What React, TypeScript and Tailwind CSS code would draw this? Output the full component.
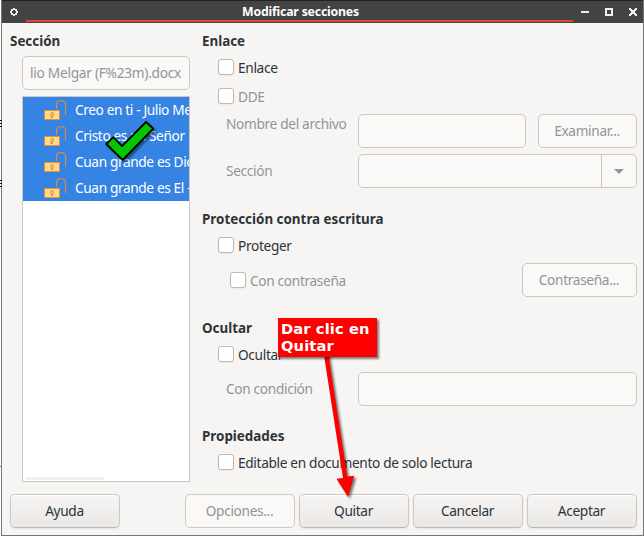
import React from "react";

const sections = [
  "Creo en ti - Julio Melgar (F#m)",
  "Cristo es mi Señor",
  "Cuan grande es Dios",
  "Cuan grande es El - Himno",
];

function Heading({ children }: { children: React.ReactNode }) {
  return (
    <h2 className="h-5 text-[13.4px] leading-5 font-bold tracking-normal whitespace-nowrap text-[#2e3436]">{children}</h2>
  );
}

function Check({ label, disabled = false }: { label: string; disabled?: boolean }) {
  return (
    <div className="flex h-4 items-center gap-1">
      <span className="h-4 w-4 shrink-0 rounded-[3px] border border-[#bfb8b1] bg-white shadow-[0_1px_1px_rgba(0,0,0,0.05)]" />
      <span className={`pt-0.5 whitespace-nowrap leading-4 ${disabled ? "text-[#929595]" : "text-[#2e3436]"}`}>{label}</span>
    </div>
  );
}

function Button({ label, disabled = false, width = "w-[110px]" }: { label: string; disabled?: boolean; width?: string }) {
  const look = disabled
    ? "border-[#cdc7c2] bg-[#faf9f8] text-[#929595]"
    : "border-[#cdc7c2] border-b-[#bfb8b1] bg-linear-to-b from-[#f6f5f4] to-[#e9e8e6] text-[#2e3436] shadow-[inset_0_1px_0_#fff,0_1px_2px_rgba(0,0,0,0.07)]";
  return (
    <button className={`flex h-[34px] shrink-0 items-center justify-center rounded-[5px] border pr-px ${width} ${look}`}>
      {label}
    </button>
  );
}

function Lock() {
  return (
    <svg className="h-[22px] w-6 shrink-0" viewBox="0 0 24 22" fill="none">
      <path d="M13.5 10V6Q13.5 1.5 18 1.5Q22.5 1.5 22.5 6V16" stroke="#e08a40" strokeWidth="1.1" />
      <rect x="1.5" y="11.5" width="15" height="9" fill="#fbdc91" stroke="#ec8a35" />
      <path d="M8 17.5V14.5Q8 13.5 9 13.5Q10.5 13.5 10.5 15Q10.5 16.5 9.5 16.5V18.5H8Z" stroke="#e8832c" />
    </svg>
  );
}

function Mark({ top }: { top: string }) {
  return (
    <div className={`absolute left-0 flex w-0.5 flex-col gap-0.5 ${top}`}>
      <span className="h-px bg-[#111]" />
      <span className="h-px bg-[#111]" />
      <span className="h-px bg-[#111]" />
    </div>
  );
}

export default function App() {
  return (
    <div className="relative h-[536px] w-[644px] overflow-hidden bg-white pl-px font-['Noto_Sans',sans-serif] text-[13.7px] tracking-[-0.34px]">
      <div className="flex h-[536px] w-[643px] flex-col border-r border-b border-l border-[#777674] bg-[#f6f5f4]">
        <header className="flex h-[23px] shrink-0 border-t border-[#222] bg-[#434343]">
          <svg className="h-[22px] w-6 shrink-0" viewBox="1 0 24 22" fill="#eee">
            <path fillRule="evenodd" d="M12 7h2v1h2v2h1v2h-1v2h-2v1h-2v-1h-2v-2H9v-2h1V8h2zM12 9v1h-1v2h1v1h2v-1h1v-2h-1V9z" />
          </svg>
          <div className="h-[21px] w-[547px] border-b-2 border-[#d94638] pl-0.5 text-center text-[12.3px] leading-[21px] font-bold tracking-[-0.2px] text-white">
            Modificar secciones
          </div>
          <svg className="h-[22px] w-[70px]" viewBox="1 0 70 22" fill="#eee">
            <path d="M9 10h8v2H9z" />
            <path fillRule="evenodd" d="M33 7h8v8h-8zM35 9v4h4V9z" />
            <path d="M57 7h2v1h1v1h2V8h1V7h2v2h-1v1h-1v2h1v1h1v2h-2v-1h-1v-1h-2v1h-1v1h-2v-2h1v-1h1v-2h-1V9h-1z" />
          </svg>
        </header>

        <main className="flex h-[459px] shrink-0 pl-2">
          <section className="w-[192px] pt-2">
            <Heading>Sección</Heading>
            <div className="mt-[5px] ml-3 flex h-[34px] w-[168px] items-center overflow-hidden rounded-[5px] border border-[#cdc7c2] bg-[#faf9f8] pl-[7px] tracking-[-0.27px] whitespace-nowrap text-[#929595]">
              lio Melgar (F%23m).docx
            </div>
            <div className="mt-1.5 ml-3 flex h-[386px] w-[168px] flex-col overflow-hidden border border-[#cdc7c2] bg-white">
              {sections.map((name) => (
                <div key={name} className="flex h-[26px] shrink-0 bg-[#3584e4] pt-0.5 pl-5 text-white">
                  <Lock />
                  <span className="ml-2 leading-[22px] tracking-[-0.38px] whitespace-nowrap">{name}</span>
                </div>
              ))}
              <div className="mt-auto mb-[1px] ml-[3px] h-[3px] w-[78px] rounded-full bg-[#eff0f0]" />
            </div>
          </section>

          <section className="w-[435px] pt-2">
            <Heading>Enlace</Heading>
            <div className="mt-2 pl-4"><Check label="Enlace" /></div>
            <div className="mt-[13px] pl-4"><Check label="DDE" disabled /></div>
            <div className="mt-[10px] flex h-[34px] pl-6 text-[#929595]">
              <span className="w-[132px] leading-5">Nombre del archivo</span>
              <div className="mr-3 w-[168px] rounded-[5px] border border-[#cdc7c2] bg-[#faf9f8]" />
              <Button label="Examinar..." disabled width="w-[99px]" />
            </div>
            <div className="mt-1.5 flex h-[34px] items-center pl-6 text-[#929595]">
              <span className="w-[132px]">Sección</span>
              <div className="flex h-[34px] w-[279px] justify-end rounded-[5px] border border-[#cdc7c2] bg-[#faf9f8]">
                <div className="flex w-[35px] items-center justify-center border-l border-[#cdc7c2]">
                  <svg className="h-[5px] w-[10px]" viewBox="0 0 10 5"><path d="M0 0h10L5 5z" fill="#929595" /></svg>
                </div>
              </div>
            </div>
            <div className="mt-[21px]"><Heading>Protección contra escritura</Heading></div>
            <div className="mt-2 pl-4"><Check label="Proteger" /></div>
            <div className="mt-[10px] flex h-[34px] items-center justify-between pl-7">
              <Check label="Con contraseña" disabled />
              <Button label="Contraseña..." disabled width="w-[115px]" />
            </div>
            <div className="mt-[21px]"><Heading>Ocultar</Heading></div>
            <div className="mt-2 pl-4"><Check label="Ocultar" /></div>
            <div className="mt-[10px] flex h-[34px] items-center pl-6 text-[#929595]">
              <span className="w-[132px]">Con condición</span>
              <div className="h-[34px] w-[279px] rounded-[5px] border border-[#cdc7c2] bg-[#faf9f8]" />
            </div>
            <div className="mt-5"><Heading>Propiedades</Heading></div>
            <div className="mt-2 pl-4"><Check label="Editable en documento de solo lectura" /></div>
          </section>
        </main>

        <footer className="mt-3 flex h-[34px] shrink-0 gap-1 pl-2">
          <Button label="Ayuda" />
          <div className="w-[57px]" />
          <Button label="Opciones..." disabled />
          <Button label="Quitar" />
          <Button label="Cancelar" />
          <Button label="Aceptar" />
        </footer>
      </div>

      <svg className="absolute top-[115px] left-[100px] h-[52px] w-[60px] drop-shadow-[2px_2px_1px_rgba(0,0,0,0.45)]" viewBox="0 0 60 52">
        <path d="M6.3 29L13.3 22.2L22 31.2L46 7L53.2 13.7L22.7 44.8Z" fill="#00c800" stroke="#000" strokeWidth="1.8" strokeLinejoin="round" />
      </svg>

      <svg className="absolute top-[350px] left-[310px] h-[155px] w-[60px] drop-shadow-[2px_2px_1px_rgba(0,0,0,0.5)]" viewBox="0 0 60 155">
        <path d="M13.5 2H18L37.3 126.5L44.3 125.7L38 147L26.5 128.7L33 128Z" fill="red" />
      </svg>
      <div className="absolute top-[318px] left-[278px] h-[39px] w-[99px] bg-[#f00] pt-0.5 pl-[3px] font-['DejaVu_Sans',sans-serif] text-[14.7px] leading-[17px] font-bold tracking-[0.1px] whitespace-nowrap text-white shadow-[2px_2px_2px_rgba(0,0,0,0.5)]">
        Dar clic en<br />Quitar
      </div>

      <Mark top="top-[120px]" />
      <Mark top="top-[180px]" />
      <span className="absolute top-[466px] left-0 h-px w-0.5 bg-[#777]" />
    </div>
  );
}
